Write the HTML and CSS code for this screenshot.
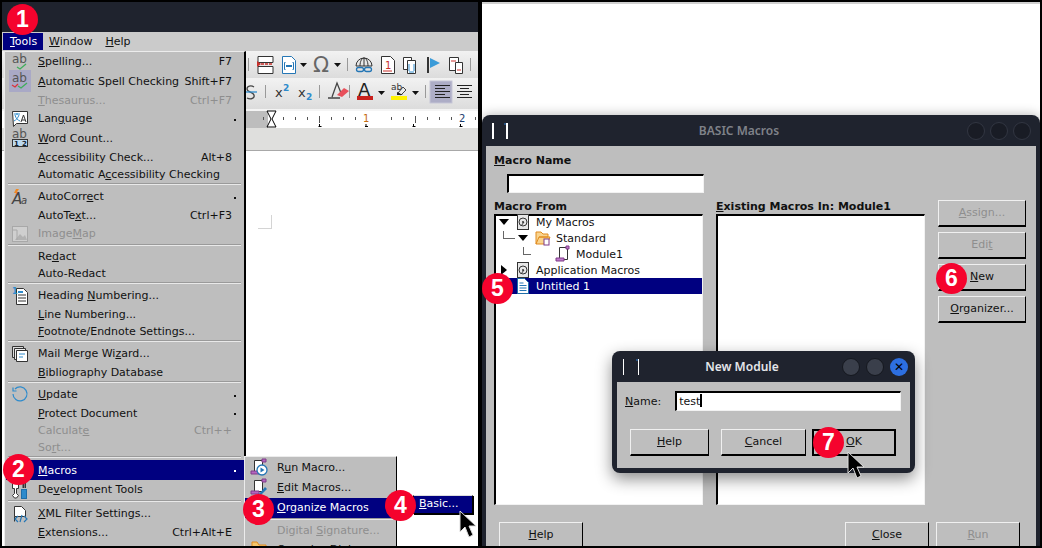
FILE: index.html
```html
<!DOCTYPE html>
<html lang="en">
  <head>
    <meta charset="UTF-8" />
    <title>BASIC Macros steps</title>
    <link rel="stylesheet" href="styles.css">
  </head>
  <body>
    <div class="stage">
      <!-- left window: writer with the tools menu open -->
      <div class="writer">
        <div class="titlebar"></div>
        <div class="menubar">
          <span class="menu-item active"><u>T</u>ools</span>
          <span class="menu-item"><u>W</u>indow</span>
          <span class="menu-item"><u>H</u>elp</span>
        </div>
        <div class="toolbar tb1">
          <svg width="232" height="26" viewBox="246 51 232 26">
            <g fill="none" stroke="#222">
              <path d="M248.500 58v13M347.500 58v13M470.500 58v13" stroke="#999"/>
              <path d="M258 56.500h15v6h-15zM258 66.500h15v7h-15z" stroke="#333" fill="#fff"/>
              <path d="M261 64h12" stroke="#c9302c" stroke-dasharray="3 1" stroke-width="1.500"/>
              <path d="M257 61v6l4-3z" fill="#c9302c" stroke="none"/>
              <path d="M282.500 56.500h9l4 4v13h-13z" stroke="#2476b5" fill="#fff"/>
              <path d="M285.500 62.500h-1v7h1M292.500 62.500h1v7h-1" stroke="#2476b5"/>
              <path d="M286 66h6" stroke="#2476b5" stroke-width="2"/>
              <path d="M356 66a8 8 0 0 1 16 0zM364 58v8M360 66c0-5 2-8 4-8s4 3 4 8" stroke="#333"/>
              <rect x="356.500" y="67.500" width="7" height="4" rx="2" stroke="#2476b5" stroke-width="1.300"/>
              <rect x="364.500" y="67.500" width="7" height="4" rx="2" stroke="#2476b5" stroke-width="1.300"/>
              <path d="M381.500 56.500h9l4 4v13h-13z" stroke="#333" fill="#fff"/>
              <path d="M383 71h9" stroke="#c9302c"/>
              <path d="M403.500 57.500h8v12h-8z" stroke="#333" fill="#fff"/>
              <path d="M407.500 60.500h8v13h-8z" stroke="#333" fill="#fff"/>
              <path d="M409 72h5M409 64v7M414 64v7" stroke="#2e8bcc"/>
              <path d="M428 57v16" stroke="#333" stroke-width="2"/>
              <path d="M430 58l10 5-10 5z" fill="#3a9bd8" stroke="none"/>
              <path d="M449.500 57.500h9v13h-9z" stroke="#333" fill="#fff"/>
              <path d="M455.500 62.500h7v11h-7z" stroke="#333" fill="#fff"/>
              <path d="M451 61h5M457 70h4" stroke="#c9302c"/>
            </g>
            <text x="385" y="69" class="ico-text red">1</text>
            <text x="313" y="72" class="ico-text omega">&#937;</text>
            <path d="M300 63h7l-3.500 4zM334 63h7l-3.500 4z" fill="#111"/>
          </svg>
        </div>
        <div class="toolbar tb2">
          <svg width="232" height="31" viewBox="246 78 232 31">
            <g fill="none">
              <path d="M265.500 85v13M319.500 85v13M349.500 85v13M425.500 85v13" stroke="#999"/>
              <path d="M254 87c-3-2-7-1-7 2s6 3 7 6-3 5-7 3" stroke="#444" stroke-width="1.300"/>
              <path d="M246 92h11" stroke="#2e8bcc" stroke-width="1.300"/>
              <path d="M332 97l5-14 4 10M328 98h12" stroke="#444" stroke-width="1.300"/>
              <path d="M337 95l7-7 5 3-7 6z" fill="#e8505b"/>
              <path d="M398 93l5-6 3 3-5 5z" stroke="#444"/>
            </g>
            <text x="275" y="97" class="ico-text big">x</text>
            <text x="283" y="91" class="ico-text sup">2</text>
            <text x="298" y="97" class="ico-text big">x</text>
            <text x="306" y="100" class="ico-text sup">2</text>
            <text x="358" y="96" class="ico-text huge">A</text>
            <rect x="357" y="96" width="16" height="4" fill="#c9211e"/>
            <path d="M378 91h7l-3.500 4zM412 91h7l-3.500 4z" fill="#111"/>
            <text x="391" y="90" class="ico-text small">ab</text>
            <path d="M397 92l6 3h-6z" fill="#222"/>
            <rect x="391" y="96" width="16" height="4" fill="#fff200"/>
            <rect x="430" y="81" width="22" height="22" fill="#adadc6" stroke="#c5c5d6"/>
            <path d="M435 85.500h15M435 88.500h10M435 91.500h15M435 94.500h10M435 97.500h15" stroke="#222"/>
            <path d="M457 85.500h15M460 88.500h9M457 91.500h15M460 94.500h9M457 97.500h15" stroke="#222"/>
          </svg>
        </div>
        <div class="ruler">
          <svg width="232" height="17" viewBox="246 111 232 17">
            <rect x="246" y="111" width="22" height="17" fill="#bdbdbd"/>
            <path d="M267 111h9l-4 8 4 8h-9l4-8z" fill="#fff" stroke="#000"/>
            <path d="M319.500 116v7M415.500 116v7M263.500 117v3M283.500 117v3M295.500 117v3M307.500 117v3M331.500 117v3M343.500 117v3M355.500 117v3M391.500 117v3M403.500 117v3M427.500 117v3M439.500 117v3M451.500 117v3M475.500 117v3" stroke="#555"/>
            <path d="M318.500 126.500h3M319.500 124v3M365 126.500h3M366 124v3M412.500 126.500h3M413.500 124v3M459.500 126.500h3M460.500 124v3" stroke="#000"/>
            <text x="363" y="122" class="ico-text orange">1</text>
            <text x="459" y="122" class="ico-text navy">2</text>
          </svg>
        </div>
        <div class="toolbar-gap"></div>
        <div class="page">
          <div class="margin-mark"></div>
        </div>

        <div class="tools-menu">
          <div class="row h19"><span class="slot">
            <svg width="18" height="18" viewBox="0 0 18 18"><text x="1" y="10" class="ico-text ab">ab</text><path d="M6 14l3 2 6-5" fill="none" stroke="#3fae5a" stroke-width="1.300"/></svg>
          </span><span class="label"><u>S</u>pelling...</span><span class="key">F7</span></div>
          <div class="row h20"><span class="slot checked">
            <svg width="18" height="18" viewBox="0 0 18 18"><text x="1" y="10" class="ico-text ab">ab</text><path d="M1 13l3 2 3-3" fill="none" stroke="#d8343a" stroke-width="1.300"/><path d="M7 14l3 2 6-5" fill="none" stroke="#3fae5a" stroke-width="1.300"/></svg>
          </span><span class="label"><u>A</u>utomatic Spell Checking</span><span class="key">Shift+F7</span></div>
          <div class="row h18 off"><span class="slot"></span><span class="label"><u>T</u>hesaurus...</span><span class="key">Ctrl+F7</span></div>
          <div class="row h19"><span class="slot">
            <svg width="18" height="18" viewBox="0 0 18 18"><path d="M1.500 1.500h15v12h-11l-3 3z" fill="#fff" stroke="#333"/><path d="M3 4h6M6 3v2M4 5c1 4 3 5 5 6M8 5c-1 3-3 5-5 6" fill="none" stroke="#2e8bcc"/><path d="M10 12l2.500-7 2.500 7M11 10h3" fill="none" stroke="#333"/></svg>
          </span><span class="label">Lan<u>g</u>uage</span><span class="dot"></span></div>
          <div class="row h20"><span class="slot">
            <svg width="18" height="18" viewBox="0 0 18 18"><text x="1" y="9" class="ico-text ab">ab</text><rect x="1.500" y="10.500" width="15" height="7" fill="#bcd9ef" stroke="#333"/><text x="3" y="17" class="ico-text tiny">1</text><text x="11" y="17" class="ico-text tiny">2</text></svg>
          </span><span class="label"><u>W</u>ord Count...</span></div>
          <div class="row h18"><span class="slot"></span><span class="label"><u>A</u>ccessibility Check...</span><span class="key">Alt+8</span></div>
          <div class="row h17"><span class="slot"></span><span class="label">Automatic A<u>c</u>cessibility Checking</span></div>
          <div class="sep s4"></div>
          <div class="row h19"><span class="slot">
            <svg width="18" height="18" viewBox="0 0 18 18"><path d="M5 1l3 0-2 3 2 0-4 4 1-3-2 0z" fill="#f08a24"/><text x="1" y="16" class="ico-text ital">A</text><text x="10" y="16" class="ico-text ital2">a</text></svg>
          </span><span class="label">AutoCorr<u>e</u>ct</span><span class="dot"></span></div>
          <div class="row h18"><span class="slot"></span><span class="label">AutoTe<u>x</u>t...</span><span class="key">Ctrl+F3</span></div>
          <div class="row h19 off"><span class="slot">
            <svg width="18" height="18" viewBox="0 0 18 18"><rect x="1.500" y="1.500" width="15" height="15" fill="#cfcfcf" stroke="#a8a8a8"/><path d="M4 15l5-6 3 3 2-2 2 5z" fill="#b2b2b2"/><path d="M2 5h4v10" fill="none" stroke="#a8a8a8"/></svg>
          </span><span class="label">Image<u>M</u>ap</span></div>
          <div class="sep s5"></div>
          <div class="row h17"><span class="slot"></span><span class="label">Re<u>d</u>act</span></div>
          <div class="row h17"><span class="slot"></span><span class="label">Auto-Redact</span></div>
          <div class="sep s4"></div>
          <div class="row h19"><span class="slot">
            <svg width="18" height="18" viewBox="0 0 18 18"><path d="M5.500 1.500h7l4 4v12h-11z" fill="#fff" stroke="#333"/><path d="M7 8h8M7 11h8M7 14h8" stroke="#333"/><path d="M7 5h5" stroke="#2e8bcc" stroke-width="2"/><text x="1" y="7" class="ico-text num">1</text></svg>
          </span><span class="label">Heading <u>N</u>umbering...</span></div>
          <div class="row h18"><span class="slot"></span><span class="label"><u>L</u>ine Numbering...</span></div>
          <div class="row h17"><span class="slot"></span><span class="label"><u>F</u>ootnote/Endnote Settings...</span></div>
          <div class="sep s4"></div>
          <div class="row h19"><span class="slot">
            <svg width="18" height="18" viewBox="0 0 18 18"><path d="M1.500 1.500h11v11h-11z" fill="#ddd" stroke="#333"/><path d="M3.500 3.500h11v11h-11z" fill="#eee" stroke="#333"/><path d="M5.500 5.500h11v11h-11z" fill="#fff" stroke="#333"/><path d="M8 9h6M8 12h4" stroke="#2e8bcc"/></svg>
          </span><span class="label">Mail Merge Wi<u>z</u>ard...</span></div>
          <div class="row h18"><span class="slot"></span><span class="label"><u>B</u>ibliography Database</span></div>
          <div class="sep s4"></div>
          <div class="row h19"><span class="slot">
            <svg width="18" height="18" viewBox="0 0 18 18"><path d="M4 3a7 7 0 1 1-2 5M2 1.500v3.500h3.500" fill="none" stroke="#2e8bcc" stroke-width="1.200"/></svg>
          </span><span class="label"><u>U</u>pdate</span><span class="dot"></span></div>
          <div class="row h18"><span class="slot"></span><span class="label"><u>P</u>rotect Document</span><span class="dot"></span></div>
          <div class="row h17 off"><span class="slot"></span><span class="label">Calculat<u>e</u></span><span class="key">Ctrl++</span></div>
          <div class="row h17 off"><span class="slot"></span><span class="label">So<u>r</u>t...</span></div>
          <div class="sep s4"></div>
          <div class="row h20 picked"><span class="slot"></span><span class="label"><u>M</u>acros</span><span class="dot"></span></div>
          <div class="row h19"><span class="slot">
            <svg width="18" height="18" viewBox="0 0 18 18"><path d="M1.500 2.500v5h2v5l-2 2 2 2.500h2l2-2.500-2-2v-5h2v-5" fill="#fff" stroke="#333"/><path d="M12.500 1v6" stroke="#333" stroke-width="2"/><path d="M14.500 2v5" stroke="#333"/><rect x="10.500" y="8.500" width="5" height="9" fill="#2e8bcc" stroke="#1f6ea8"/></svg>
          </span><span class="label">De<u>v</u>elopment Tools</span></div>
          <div class="sep s5"></div>
          <div class="row h19"><span class="slot">
            <svg width="18" height="18" viewBox="0 0 18 18"><path d="M3.500 1.500h7l4 4v6h-11z" fill="#fff" stroke="#333"/><path d="M3.500 11.500v5" stroke="#333"/><path d="M7 11l-3 3 3 3M13 11l3 3-3 3M11 10l-2 7" fill="none" stroke="#2476b5" stroke-width="1.200"/></svg>
          </span><span class="label"><u>X</u>ML Filter Settings...</span></div>
          <div class="row h18"><span class="slot"></span><span class="label"><u>E</u>xtensions...</span><span class="key">Ctrl+Alt+E</span></div>
          <div class="row h18"><span class="slot"></span><span class="label"><u>C</u>ustomize...</span></div>
        </div>

        <div class="sub-menu">
          <div class="row h20"><span class="slot">
            <svg width="18" height="18" viewBox="0 0 18 18"><path d="M4.500 2.500h8v11h-8z" fill="#fff" stroke="#333"/><path d="M12 1h4v3h-4zM1 13h8v3H1z" fill="#b565c0" stroke="#7e3c88"/><circle cx="12" cy="12" r="5" fill="#fff" stroke="#2476b5" stroke-width="1.300"/><path d="M10.500 9.500l4 2.500-4 2.500z" fill="#2476b5"/></svg>
          </span><span class="label">R<u>u</u>n Macro...</span></div>
          <div class="row h20"><span class="slot">
            <svg width="18" height="18" viewBox="0 0 18 18"><path d="M4.500 2.500h8v11h-8z" fill="#fff" stroke="#333"/><path d="M12 1h4v3h-4zM1 13h8v3H1z" fill="#b565c0" stroke="#7e3c88"/><path d="M9 16l6-7 2 2-6 6z" fill="#2476b5"/></svg>
          </span><span class="label"><u>E</u>dit Macros...</span></div>
          <div class="row h20 picked"><span class="slot"></span><span class="label"><u>O</u>rganize Macros</span></div>
          <div class="sep s4"></div>
          <div class="row h18 off"><span class="slot"></span><span class="label">Digital <u>S</u>ignature...</span></div>
          <div class="row h20"><span class="slot">
            <svg width="18" height="18" viewBox="0 0 18 18"><path d="M2 5V2h5l2 3h7v10H2z" fill="#f6c66a" stroke="#e08a1e"/></svg>
          </span><span class="label">Organize Dialogs...</span></div>
        </div>
        <div class="basic-menu"><u>B</u>asic...</div>
      </div>

      <!-- right window: macro dialog with new module on top -->
      <div class="desk">
        <div class="macros">
          <div class="dlg-title">
            <span class="win-mark"></span>
            <span class="dlg-name dim">BASIC Macros</span>
            <span class="win-btn"></span><span class="win-btn"></span><span class="win-btn"></span>
          </div>
          <div class="dlg-body">
            <label class="bold"><u>M</u>acro Name</label>
            <div class="input name-input"></div>
            <div class="macro-grid">
              <div>
                <label class="bold">Macro From</label>
                <div class="list tree">
                  <div class="tree-row">
                    <span class="tw open"></span>
                    <svg class="node" width="14" height="16" viewBox="0 0 14 16"><rect x="1.500" y="0.500" width="11" height="15" fill="#e6e6e6" stroke="#333"/><circle cx="7" cy="8" r="4" fill="none" stroke="#333"/><circle cx="7" cy="8" r="1" fill="#333"/><path d="M5 12l3-4" stroke="#333"/></svg>
                    <span>My Macros</span>
                  </div>
                  <div class="tree-row lvl1">
                    <span class="elbow"></span>
                    <span class="tw open"></span>
                    <svg class="node" width="16" height="16" viewBox="0 0 16 16"><path d="M1 14V2h5l2 2h5v3H4l-3 7h11l3-7H4" fill="#f9d48e" stroke="#e08a1e"/><rect x="9" y="9" width="5" height="6" fill="#fff" stroke="#7e3c88"/></svg>
                    <span>Standard</span>
                  </div>
                  <div class="tree-row lvl2">
                    <span class="elbow"></span>
                    <svg class="node" width="16" height="16" viewBox="0 0 16 16"><path d="M4.500 1.500h8v12h-8z" fill="#fff" stroke="#333"/><path d="M11 0h3v3h-3zM1 12h8v3H1z" fill="#c07acb" stroke="#7e3c88"/></svg>
                    <span>Module1</span>
                  </div>
                  <div class="tree-row">
                    <span class="tw shut"></span>
                    <svg class="node" width="14" height="16" viewBox="0 0 14 16"><rect x="1.500" y="0.500" width="11" height="15" fill="#e6e6e6" stroke="#333"/><circle cx="7" cy="8" r="4" fill="none" stroke="#333"/><circle cx="7" cy="8" r="1" fill="#333"/><path d="M5 12l3-4" stroke="#333"/></svg>
                    <span>Application Macros</span>
                  </div>
                  <div class="tree-row picked">
                    <span class="tw"></span>
                    <svg class="node" width="14" height="16" viewBox="0 0 14 16"><path d="M1.500 0.500h7l4 4v11h-11z" fill="#fff" stroke="#1f6ea8"/><path d="M3.500 5h4M3.500 7.500h7M3.500 10h7M3.500 12.500h7" stroke="#2476b5"/></svg>
                    <span>Untitled 1</span>
                  </div>
                </div>
              </div>
              <div>
                <label class="bold"><u>E</u>xisting Macros In: Module1</label>
                <div class="list"></div>
              </div>
              <div class="side-btns">
                <button class="btn off"><u>A</u>ssign...</button>
                <button class="btn off">Edi<u>t</u></button>
                <button class="btn"><u>N</u>ew</button>
                <button class="btn"><u>O</u>rganizer...</button>
              </div>
            </div>
            <div class="dlg-footer">
              <button class="btn wide"><u>H</u>elp</button>
              <span class="grow"></span>
              <button class="btn wide"><u>C</u>lose</button>
              <button class="btn wide off"><u>R</u>un</button>
            </div>
          </div>
        </div>

        <div class="new-module">
          <div class="dlg-title small">
            <span class="win-mark thin"></span>
            <span class="dlg-name">New Module</span>
            <span class="win-btn lit"></span><span class="win-btn lit"></span><span class="win-btn close">&#10005;</span>
          </div>
          <div class="nm-body">
            <div class="nm-field">
              <label><u>N</u>ame:</label>
              <div class="input nm-input">test<span class="caret"></span></div>
            </div>
            <div class="nm-btns">
              <button class="btn nm-help"><u>H</u>elp</button>
              <button class="btn nm-cancel"><u>C</u>ancel</button>
              <button class="btn nm-ok"><u>O</u>K</button>
            </div>
          </div>
        </div>
      </div>

      <svg class="cursor c1" width="20" height="30" viewBox="0 0 20 30"><path d="M2 1v21l5-5 4 10 4-2-4-9h7z" fill="#000" stroke="#ddd"/></svg>
      <svg class="cursor c2" width="20" height="30" viewBox="0 0 20 30"><path d="M2 1v21l5-5 4 10 4-2-4-9h7z" fill="#000" stroke="#ddd"/></svg>

      <span class="badge b1">1</span>
      <span class="badge b2">2</span>
      <span class="badge b3">3</span>
      <span class="badge b4">4</span>
      <span class="badge b5">5</span>
      <span class="badge b6">6</span>
      <span class="badge b7">7</span>
    </div>
  </body>
</html>
```

FILE: styles.css
```css
* {
  box-sizing: border-box;
}

html,
body {
  margin: 0;
  background: #000;
}

body {
  font-family: "DejaVu Sans", sans-serif;
  font-size: 11px;
  color: #111;
  overflow: hidden;
}

svg {
  display: block;
  overflow: visible;
}

u {
  text-underline-offset: 1px;
}

.stage {
  position: relative;
  width: 1042px;
  height: 548px;
  padding: 2px;
  display: flex;
  gap: 4px;
  overflow: hidden;
}

/* left window */
.writer {
  position: relative;
  width: 476px;
  height: 544px;
  display: flex;
  flex-direction: column;
  overflow: hidden;
  background: #fff;
}

.titlebar {
  height: 30px;
  flex: none;
  background: #1f232e;
}

.menubar {
  height: 19px;
  flex: none;
  display: flex;
  padding-left: 1px;
  background: #cbcbcb;
}

.menu-item {
  padding: 3px 6px 0;
  margin-right: 1px;
  height: 18px;
}

.menu-item.active {
  background: #000080;
  color: #fff;
  width: 40px;
  height: 17px;
  margin-top: 1px;
  padding: 2px 0 0 7px;
  margin-right: 0;
}

.toolbar {
  flex: none;
  padding-left: 244px;
  background: linear-gradient(#f2f2f2, #dcdcdc);
}

.tb1 {
  height: 27px;
}

.tb2 {
  height: 33px;
  padding-top: 0;
  border-bottom: 2px solid #f4f4f4;
}

.ruler {
  flex: none;
  height: 17px;
  padding-left: 244px;
  background: #fff;
}

.toolbar-gap {
  flex: none;
  height: 23px;
  background: #dfdfdd;
  border-bottom: 1px solid #a8a8a8;
}

.page {
  flex: 1;
  position: relative;
  background: #fff;
}

.margin-mark {
  position: absolute;
  left: 256px;
  top: 64px;
  width: 14px;
  height: 14px;
  border-right: 1px solid #d4d4d4;
  border-bottom: 1px solid #d4d4d4;
}

.tools-menu {
  position: absolute;
  left: 2px;
  top: 49px;
  width: 242px;
  height: 500px;
  padding-left: 1px;
  background: #bebebe;
  border-top: 1px solid #ececec;
  border-left: 1px solid #ececec;
  border-right: 2px solid #000;
}

.row {
  display: flex;
  align-items: center;
  padding-right: 12px;
  white-space: nowrap;
  position: relative;
}

.h17 {
  height: 17px;
}

.h18 {
  height: 18px;
}

.h19 {
  height: 19px;
}

.h20 {
  height: 20px;
}

.slot {
  width: 32px;
  height: 100%;
  flex: none;
  display: flex;
  align-items: center;
  padding-left: 5px;
}

.slot.checked svg {
  background: #a9a9c6;
  outline: 2px solid #a9a9c6;
}

.label {
  flex: 1;
}

.key {
  margin-left: 4px;
}

.dot {
  position: absolute;
  right: 8px;
  top: 50%;
  width: 2px;
  height: 2px;
  background: #111;
}

.off {
  color: #8e8e8e;
}

.picked {
  background: #000080;
  color: #fff;
}

.picked .dot {
  background: #fff;
}

.sep {
  position: relative;
}

.sep::after {
  content: "";
  position: absolute;
  left: 2px;
  right: 3px;
  top: 1px;
  height: 1px;
  background: #e9e9e9;
  box-shadow: 0 -1px 0 #9a9a9a;
}

.s4 {
  height: 4px;
}

.s5 {
  height: 5px;
}

.s5::after {
  top: 2px;
}

.sub-menu {
  position: absolute;
  left: 242px;
  top: 454px;
  width: 153px;
  height: 100px;
  padding-top: 1px;
  background: #bebebe;
  border-top: 1px solid #ececec;
  border-left: 1px solid #ececec;
  border-right: 1px solid #000;
}

.sub-menu .row {
  padding-bottom: 2px;
}

.sub-menu .slot {
  width: 32px;
}

.basic-menu {
  position: absolute;
  left: 411px;
  top: 493px;
  width: 60px;
  height: 19px;
  padding: 1px 0 0 5px;
  background: #000080;
  color: #fff;
  border: 1px solid #000;
  border-top-color: #ddd;
  box-shadow: 1px 1px 0 #000;
}

.ico-text {
  font-family: "DejaVu Sans", sans-serif;
  fill: #333;
}

.ab {
  font-size: 12px;
  fill: #555;
}

.big {
  font-size: 13px;
}

.sup {
  font-size: 9px;
  font-weight: bold;
  fill: #2e8bcc;
}

.huge {
  font-size: 18px;
  fill: #222;
}

.omega {
  font-size: 21px;
  fill: #666;
}

.small {
  font-size: 9px;
}

.tiny {
  font-size: 7px;
  font-weight: bold;
  fill: #123;
}

.red {
  font-size: 10px;
  fill: #c9302c;
}

.orange {
  font-size: 10px;
  fill: #c56a10;
}

.navy {
  font-size: 10px;
  fill: #1c3c6e;
}

.ital {
  font-size: 15px;
  font-style: italic;
  fill: #444;
}

.ital2 {
  font-size: 10px;
  font-style: italic;
  fill: #444;
}

.num {
  font-size: 8px;
  font-weight: bold;
  fill: #2e8bcc;
}

/* right window */
.desk {
  position: relative;
  width: 558px;
  height: 544px;
  padding-top: 111px;
  overflow: hidden;
  background: #fff;
  border-top: 2px solid #d0d0d0;
}

.macros {
  height: 431px;
  display: flex;
  flex-direction: column;
  border-radius: 8px 8px 0 0;
  background: #1f232e;
  box-shadow: 0 0 12px rgba(0, 0, 0, 0.3);
}

.dlg-title {
  height: 31px;
  flex: none;
  display: flex;
  align-items: center;
  padding: 0 9px 0 10px;
  gap: 5px;
}

.dlg-name {
  flex: 1;
  text-align: center;
  font-family: "Noto Sans", sans-serif;
  font-size: 12px;
  font-weight: 600;
  color: #e4e6ea;
  padding-left: 3px;
}

.dlg-name.dim {
  color: #7f8289;
}

.win-mark {
  position: relative;
  width: 16px;
  height: 16px;
  flex: none;
  border-left: 2px solid #fff;
  border-right: 2px solid #fff;
}

.win-mark::after {
  content: "";
  position: absolute;
  right: 0;
  top: 0;
  width: 2px;
  height: 2px;
  background: #27507f;
}

.win-mark.thin {
  border-width: 0 1px;
}

.win-btn {
  width: 18px;
  height: 18px;
  flex: none;
  border-radius: 50%;
  background: #191c25;
  border: 1px solid #323642;
}

.win-btn.lit {
  background: #3a3f4b;
  border-color: #15181f;
}

.win-btn.close {
  background: #2d6fe0;
  border: none;
  color: #000;
  font-size: 12px;
  font-weight: bold;
  line-height: 18px;
  text-align: center;
}

.dlg-body {
  flex: 1;
  margin: 0 4px;
  padding: 8px 10px 0 8px;
  background: #bebebe;
}

.bold {
  display: block;
  font-weight: bold;
  height: 14px;
  line-height: 14px;
  white-space: nowrap;
}

.input {
  background: #fff;
  border-top: 2px solid #000;
  border-left: 2px solid #000;
  border-right: 1px solid #f2f2f2;
  border-bottom: 1px solid #f2f2f2;
}

.name-input {
  width: 197px;
  height: 19px;
  margin: 6px 0 7px 13px;
}

.macro-grid {
  display: grid;
  grid-template-columns: 209px 209px 88px;
  gap: 13px;
}

.list {
  height: 291px;
  background: #fff;
  border-top: 2px solid #000;
  border-left: 2px solid #000;
  border-right: 1px solid #f2f2f2;
  border-bottom: 1px solid #f2f2f2;
}

.tree-row {
  height: 16px;
  display: flex;
  align-items: center;
  padding-left: 3px;
  white-space: nowrap;
}

.tree-row:first-child {
  margin-top: -2px;
}

.tree-row .node {
  margin-right: 6px;
  flex: none;
}

.tree-row.lvl1 {
  padding-left: 7px;
}

.tree-row.lvl1 .node,
.tree-row.lvl2 .node {
  margin-right: 5px;
}

.tree-row.lvl2 {
  padding-left: 27px;
}

.tw {
  width: 17px;
  height: 16px;
  flex: none;
  position: relative;
}

.tw.open::before {
  content: "";
  position: absolute;
  left: 0;
  top: 5px;
  border-left: 5px solid transparent;
  border-right: 5px solid transparent;
  border-top: 6px solid #000;
}

.tw.shut::before {
  content: "";
  position: absolute;
  left: 2px;
  top: 3px;
  border-top: 5px solid transparent;
  border-bottom: 5px solid transparent;
  border-left: 6px solid #000;
}

.elbow {
  width: 12px;
  height: 8px;
  margin: -6px 3px 0 0;
  flex: none;
  border-left: 1px solid #666;
  border-bottom: 1px solid #666;
}

.lvl2 .elbow {
  width: 8px;
  margin-right: 24px;
}

.btn {
  display: block;
  font-family: inherit;
  font-size: 11px;
  color: #111;
  background: #bebebe;
  padding: 0 0 2px;
  border-style: solid;
  border-width: 1px 1px 2px 1px;
  border-color: #f0f0f0 #000 #000 #f0f0f0;
}

.btn.off {
  color: #8e8e8e;
}

.side-btns {
  display: flex;
  flex-direction: column;
  gap: 5px;
}

.side-btns .btn {
  height: 27px;
  width: 88px;
}

.dlg-footer {
  display: flex;
  gap: 7px;
  padding: 17px 6px 0 5px;
}

.grow {
  flex: 1;
}

.btn.wide {
  width: 84px;
  height: 27px;
}

.new-module {
  position: absolute;
  left: 130px;
  top: 347px;
  width: 303px;
  height: 122px;
  display: flex;
  flex-direction: column;
  border-radius: 8px;
  background: #1f232e;
  box-shadow: 0 6px 16px rgba(0, 0, 0, 0.45);
}

.dlg-title.small {
  padding: 0 7px 0 11px;
  gap: 6px;
}

.nm-body {
  flex: 1;
  margin: 0 5px 5px;
  padding: 9px 9px 0 8px;
  background: #bebebe;
}

.nm-field {
  display: flex;
  align-items: center;
  gap: 14px;
}

.nm-input {
  width: 226px;
  height: 20px;
  padding-left: 2px;
  line-height: 17px;
  color: #111;
}

.caret {
  display: inline-block;
  width: 2px;
  height: 13px;
  background: #000;
  vertical-align: -2px;
}

.nm-btns {
  display: flex;
  margin: 18px 0 0 5px;
}

.nm-btns .btn {
  height: 27px;
}

.nm-help {
  width: 79px;
  margin-right: 12px;
}

.nm-cancel {
  width: 85px;
  margin-right: 6px;
}

.btn.nm-ok {
  width: 84px;
  border: 2px solid #000;
}

/* things on top of the windows */
.cursor {
  position: absolute;
}

.c1 {
  left: 458px;
  top: 510px;
}

.c2 {
  left: 846px;
  top: 451px;
}

.badge {
  position: absolute;
  width: 31px;
  height: 31px;
  border-radius: 50%;
  background: #f5032d;
  color: #fff;
  font-family: "Liberation Sans", sans-serif;
  font-size: 23px;
  font-weight: bold;
  line-height: 31px;
  text-align: center;
}

.b1 {
  left: 7px;
  top: 4px;
}

.b2 {
  left: 3px;
  top: 454px;
}

.b3 {
  left: 243px;
  top: 494px;
}

.b4 {
  left: 385px;
  top: 490px;
}

.b5 {
  left: 482px;
  top: 273px;
}

.b6 {
  left: 936px;
  top: 263px;
}

.b7 {
  left: 813px;
  top: 427px;
}
```
